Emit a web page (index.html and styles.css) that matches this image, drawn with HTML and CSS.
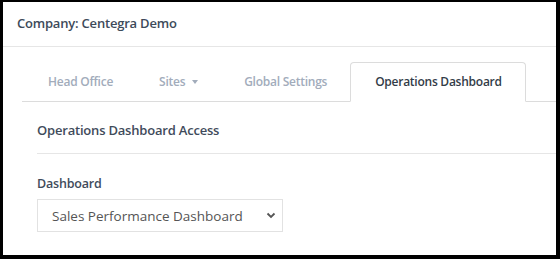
FILE: index.html
```html
<!DOCTYPE html>
<html>

<head>
    <title>Company</title>
    <link rel="stylesheet" href="styles.css">
</head>

<body>
    <div class="frame">
        <div class="page-header">Company: Centegra Demo</div>

        <div class="content">
            <ul class="tabs">
                <li class="tab">Head Office</li>
                <li class="tab">Sites <span class="caret"></span></li>
                <li class="tab">Global Settings</li>
                <li class="tab active">Operations Dashboard</li>
            </ul>

            <div class="panel">
                <h2 class="panel-title">Operations Dashboard Access</h2>
                <div class="field">
                    <label for="dashboard">Dashboard</label>
                    <div class="select-wrap">
                        <select id="dashboard">
                            <option>Sales Performance Dashboard</option>
                        </select>
                        <svg class="chevron" width="10" height="7" viewBox="0 0 10 7">
                            <path d="M1.5 1.5 L5 5 L8.5 1.5" fill="none" stroke="#555" stroke-width="1.8"/>
                        </svg>
                    </div>
                </div>
            </div>
        </div>
    </div>
</body>
</html>
```

FILE: styles.css
```css
html,
body {
    margin: 0;
    padding: 0;
    background: #000;
}

body {
    font-family: "Open Sans", sans-serif;
    color: #444;
}

.frame {
    box-sizing: border-box;
    width: 560px;
    height: 259px;
    border-style: solid;
    border-color: #000;
    border-width: 2px 4px 4px 3px;
    background: #fff;
    overflow: hidden;
}

.page-header {
    height: 44px;
    line-height: 42px;
    padding-left: 14px;
    font-size: 13px;
    font-weight: 600;
    letter-spacing: -0.2px;
    color: #3d4a5a;
    border-bottom: 1px solid #e6e6e6;
}

.content {
    padding-left: 19px;
}

.tabs {
    list-style: none;
    margin: 15px 0 0;
    padding: 0;
    display: flex;
    border-bottom: 1px solid #dcdcdc;
}

.tab {
    height: 38px;
    line-height: 38px;
    padding: 0 22px;
    margin-bottom: -1px;
    border: 1px solid transparent;
    border-radius: 4px 4px 0 0;
    font-size: 12px;
    font-weight: 600;
    letter-spacing: -0.25px;
    color: #a2acbb;
    white-space: nowrap;
}

.tab:first-child {
    margin-left: 3px;
}

.tab .caret {
    display: inline-block;
    margin-left: 4px;
    vertical-align: 2px;
    border-top: 4px solid #a2acbb;
    border-left: 3px solid transparent;
    border-right: 3px solid transparent;
}

.tab.active {
    padding: 0 23px 0 24px;
    color: #333c48;
    background: #fff;
    border-color: #dcdcdc #dcdcdc #fff;
}

.panel {
    padding-left: 15px;
}

.panel-title {
    margin: 0;
    height: 51px;
    line-height: 56px;
    font-size: 13px;
    font-weight: 600;
    letter-spacing: -0.2px;
    color: #3f4b5b;
    border-bottom: 1px solid #e6e6e6;
}

.field {
    padding-top: 21px;
}

.field label {
    display: block;
    font-size: 12.5px;
    font-weight: 600;
    letter-spacing: -0.2px;
    color: #3f4b5b;
    margin-bottom: 7px;
}

.select-wrap {
    position: relative;
    width: 246px;
}

.select-wrap select {
    box-sizing: border-box;
    width: 246px;
    height: 33px;
    padding: 0 14px;
    font-family: "Open Sans", sans-serif;
    font-size: 13.5px;
    color: #555;
    background: #fff;
    border: 1px solid #e2e2e2;
    border-radius: 0;
    appearance: none;
    -webkit-appearance: none;
}

.chevron {
    position: absolute;
    right: 7px;
    top: 13px;
}
```
